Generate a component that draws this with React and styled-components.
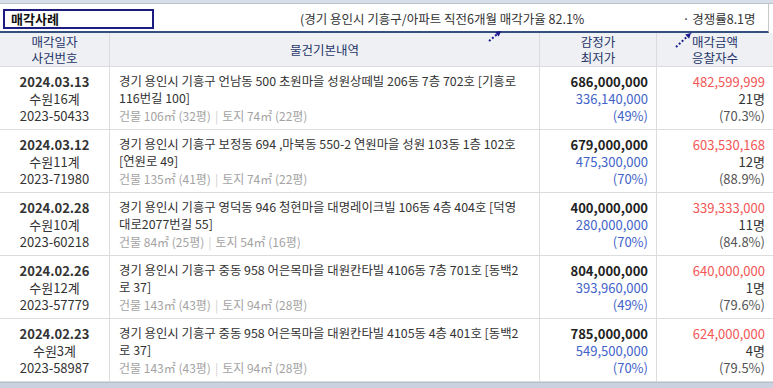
import React from 'react'
import styled, { createGlobalStyle } from 'styled-components'

const GlobalStyle = createGlobalStyle`
  html, body {
    margin: 0;
    padding: 0;
    background: #fff;
    overflow: hidden;
  }
  body {
    font-family: "Noto Sans CJK KR", "Noto Sans", sans-serif;
    color: #333;
  }
`

const rows = [
    {
        date: '2024.03.13', court: '수원16계', caseNo: '2023-50433',
        address: '경기 용인시 기흥구 언남동 500 초원마을 성원상떼빌 206동 7층 702호 [기흥로116번길 100]',
        building: '건물 106㎡ (32평)', land: '토지 74㎡ (22평)',
        appraisal: '686,000,000', minimum: '336,140,000', minRate: '(49%)',
        sold: '482,599,999', bidders: '21명', soldRate: '(70.3%)',
    },
    {
        date: '2024.03.12', court: '수원11계', caseNo: '2023-71980',
        address: '경기 용인시 기흥구 보정동 694 ,마북동 550-2 연원마을 성원 103동 1층 102호 [연원로 49]',
        building: '건물 135㎡ (41평)', land: '토지 74㎡ (22평)',
        appraisal: '679,000,000', minimum: '475,300,000', minRate: '(70%)',
        sold: '603,530,168', bidders: '12명', soldRate: '(88.9%)',
    },
    {
        date: '2024.02.28', court: '수원10계', caseNo: '2023-60218',
        address: '경기 용인시 기흥구 영덕동 946 청현마을 대명레이크빌 106동 4층 404호 [덕영대로2077번길 55]',
        building: '건물 84㎡ (25평)', land: '토지 54㎡ (16평)',
        appraisal: '400,000,000', minimum: '280,000,000', minRate: '(70%)',
        sold: '339,333,000', bidders: '11명', soldRate: '(84.8%)',
    },
    {
        date: '2024.02.26', court: '수원12계', caseNo: '2023-57779',
        address: '경기 용인시 기흥구 중동 958 어은목마을 대원칸타빌 4106동 7층 701호 [동백2로 37]',
        building: '건물 143㎡ (43평)', land: '토지 94㎡ (28평)',
        appraisal: '804,000,000', minimum: '393,960,000', minRate: '(49%)',
        sold: '640,000,000', bidders: '1명', soldRate: '(79.6%)',
    },
    {
        date: '2024.02.23', court: '수원3계', caseNo: '2023-58987',
        address: '경기 용인시 기흥구 중동 958 어은목마을 대원칸타빌 4105동 4층 401호 [동백2로 37]',
        building: '건물 143㎡ (43평)', land: '토지 94㎡ (28평)',
        appraisal: '785,000,000', minimum: '549,500,000', minRate: '(70%)',
        sold: '624,000,000', bidders: '4명', soldRate: '(79.5%)',
    },
]

const Page = styled.div`
  width: 773px;
  height: 388px;
  display: flex;
  flex-direction: column;
  overflow: hidden;
`

const TopStrip = styled.div`
  height: 3px;
  background: #d7dee8;
  border-bottom: 1px solid #b9c3d0;
`

const TopBar = styled.div`
  position: relative;
  height: 27px;
  display: flex;
  align-items: center;
  border-right: 1px solid #c8c8c8;
  margin-right: 4px;
  border-bottom: 2px solid #34507e;
`

const TitleBox = styled.div`
  box-sizing: border-box;
  width: 151px;
  height: 20px;
  margin-left: 3px;
  margin-top: 2px;
  border: 2px solid #1c1c80;
  padding-left: 6px;
  font-size: 13px;
  font-weight: 700;
  line-height: 16px;
  color: #111;
`

const Caption = styled.span`
  font-size: 12.5px;
  line-height: 16px;
  color: #333;
  margin-left: ${props => props.offset}px;
  margin-top: 2px;
`

const Arrows = styled.svg`
  position: absolute;
  left: 0;
  top: -4px;
  width: 773px;
  height: 50px;
  overflow: visible;
  pointer-events: none;
`

const Table = styled.div`
  display: flex;
  flex-direction: column;
`

const Row = styled.div`
  display: grid;
  grid-template-columns: 110px 430px 117px 1fr;
  border-bottom: 1px solid #dcdcdc;
  background: ${props => props.head ? '#eef0f3' : '#fff'};
  height: ${props => props.head ? '33px' : '62px'};
`

const Cell = styled.div`
  box-sizing: border-box;
  border-right: ${props => props.last ? 'none' : '1px solid #dcdcdc'};
  display: flex;
  flex-direction: column;
  justify-content: center;
  align-items: ${props => props.align === 'right' ? 'flex-end' : props.align === 'left' ? 'flex-start' : 'center'};
  text-align: ${props => props.align || 'center'};
  padding: ${props => props.align === 'left' ? '0 12px 0 9px' : props.align === 'right' ? '0 8px 0 0' : '0'};
`

const HeadText = styled.div`
  font-size: 12.5px;
  line-height: 16px;
  color: #26366a;
  text-align: center;
`

const Line = styled.div`
  font-size: 13px;
  line-height: 17px;
  font-weight: ${props => props.bold ? 700 : 400};
  color: ${props => props.color || '#333'};
  white-space: nowrap;
`

const Address = styled.div`
  font-size: 12.4px;
  line-height: 17px;
  color: #333;
`

const AreaInfo = styled.div`
  font-size: 12px;
  line-height: 17px;
  color: #a3a3a3;
`

const Divider = styled.span`
  color: #d0d0d0;
  margin: 0 4px;
`

const BottomStrip = styled.div`
  flex: 1;
  background: #c9d2de;
  border-top: 1px solid #b5bfcc;
`

const DottedArrow = ({ x1, y1, x2, y2 }) => {
    const angle = Math.atan2(y2 - y1, x2 - x1)
    const len = 6
    const a1 = angle + Math.PI - 0.5
    const a2 = angle + Math.PI + 0.5
    const p1 = `${x2 + len * Math.cos(a1)},${y2 + len * Math.sin(a1)}`
    const p2 = `${x2 + len * Math.cos(a2)},${y2 + len * Math.sin(a2)}`
    return (
        <g>
            <line x1={x1} y1={y1} x2={x2} y2={y2} stroke="#1a1a8c" strokeWidth="2" strokeDasharray="2 2" />
            <polygon points={`${x2},${y2} ${p1} ${p2}`} fill="#1a1a8c" />
        </g>
    )
}

const App = () => {
    return (
        <Page>
            <GlobalStyle />
            <TopStrip />
            <TopBar>
                <TitleBox>매각사례</TitleBox>
                <Caption offset={146}>(경기 용인시 기흥구/아파트 직전6개월 매각가율 82.1%</Caption>
                <Caption offset={98}>· 경쟁률8.1명</Caption>
                <Arrows>
                    <DottedArrow x1={489} y1={41} x2={501} y2={31} />
                    <DottedArrow x1={676} y1={47} x2={691} y2={33} />
                </Arrows>
            </TopBar>
            <Table>
                <Row head>
                    <Cell><HeadText>매각일자<br />사건번호</HeadText></Cell>
                    <Cell><HeadText>물건기본내역</HeadText></Cell>
                    <Cell><HeadText>감정가<br />최저가</HeadText></Cell>
                    <Cell last><HeadText>매각금액<br />응찰자수</HeadText></Cell>
                </Row>
                {rows.map(r => (
                    <Row key={r.caseNo}>
                        <Cell>
                            <Line bold>{r.date}</Line>
                            <Line>{r.court}</Line>
                            <Line>{r.caseNo}</Line>
                        </Cell>
                        <Cell align="left">
                            <Address>{r.address}</Address>
                            <AreaInfo>{r.building}<Divider>|</Divider>{r.land}</AreaInfo>
                        </Cell>
                        <Cell align="right">
                            <Line bold color="#222">{r.appraisal}</Line>
                            <Line color="#3f63c9">{r.minimum}</Line>
                            <Line color="#3f63c9">{r.minRate}</Line>
                        </Cell>
                        <Cell align="right" last>
                            <Line color="#f25656">{r.sold}</Line>
                            <Line>{r.bidders}</Line>
                            <Line color="#555">{r.soldRate}</Line>
                        </Cell>
                    </Row>
                ))}
            </Table>
            <BottomStrip />
        </Page>
    )
}

export default App
